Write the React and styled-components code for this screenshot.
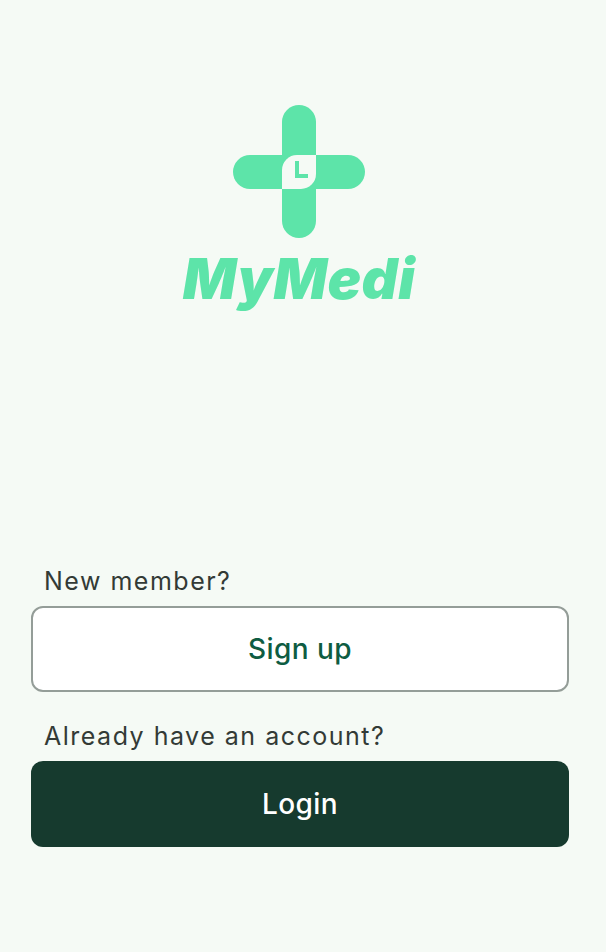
import React from 'react';
import styled, { createGlobalStyle } from 'styled-components';

const GlobalStyle = createGlobalStyle`
  html, body {
    margin: 0;
    padding: 0;
    background-color: #f5faf5;
  }
`;

const Page = styled.main`
  box-sizing: border-box;
  width: 606px;
  height: 952px;
  padding: 105px 37px 0 31px;
  display: flex;
  flex-direction: column;
  font-family: Inter, "Open Sans", sans-serif;
`;

const Brand = styled.div`
  display: flex;
  flex-direction: column;
  align-items: center;
  gap: 8px;
  height: 456px;
  padding-right: 2px;
`;

const BrandName = styled.div`
  font-size: 56px;
  line-height: 66px;
  font-weight: 900;
  font-style: italic;
  letter-spacing: 0.4px;
  color: #5de4a9;
`;

const Group = styled.section`
  display: flex;
  flex-direction: column;
  margin-bottom: 24px;
`;

const Label = styled.label`
  box-sizing: border-box;
  height: 45px;
  padding: 0 0 6px 13px;
  display: flex;
  align-items: center;
  font-size: 25px;
  font-weight: 400;
  letter-spacing: 1.5px;
  color: #333a36;
`;

const Button = styled.button`
  box-sizing: border-box;
  width: 100%;
  height: 86px;
  border-radius: 12px;
  border: ${({ $primary }) => ($primary ? 'none' : '2px solid #949d98')};
  background-color: ${({ $primary }) => ($primary ? '#163a2e' : '#ffffff')};
  color: ${({ $primary }) => ($primary ? '#ffffff' : '#0e5c42')};
  font-family: inherit;
  font-size: 28px;
  font-weight: 500;
  letter-spacing: 0.4px;
`;

const Logo = () => (
  <svg width="132" height="133" viewBox="0 0 132 133">
    <rect x="49" y="0" width="34" height="133" rx="17" fill="#5de4a9" />
    <rect x="0" y="50" width="132" height="34" rx="17" fill="#5de4a9" />
    <path d="M64 50H83V69A15 15 0 0 1 68 84H49V65A15 15 0 0 1 64 50Z" fill="#f5faf5" />
    <path d="M64 56V71H75" fill="none" stroke="#5de4a9" strokeWidth="4" />
  </svg>
);

const App = () => {
  return (
    <>
      <GlobalStyle />
      <Page>
        <Brand>
          <Logo />
          <BrandName>MyMedi</BrandName>
        </Brand>
        <Group>
          <Label>New member?</Label>
          <Button>Sign up</Button>
        </Group>
        <Group>
          <Label>Already have an account?</Label>
          <Button $primary>Login</Button>
        </Group>
      </Page>
    </>
  );
};

export default App;
